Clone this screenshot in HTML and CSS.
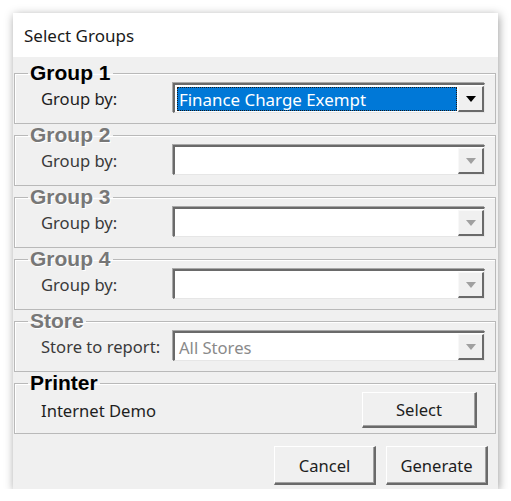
FILE: index.html
```html
<!DOCTYPE html>
<html>
<head>
<meta charset="utf-8">
<title>Select Groups</title>
<link rel="stylesheet" href="styles.css">
</head>
<body>
<div class="window">
  <div class="titlebar">Select Groups</div>
  <div class="body">
    <fieldset class="frame">
      <legend class="legend">Group 1</legend>
      <div class="row">
        <span class="label">Group by:</span>
        <div class="combo">
          <div class="value selected"><span class="focus">Finance Charge Exempt</span></div>
          <div class="drop"><span class="arrow"></span></div>
        </div>
      </div>
    </fieldset>
    <fieldset class="frame disabled">
      <legend class="legend">Group 2</legend>
      <div class="row">
        <span class="label">Group by:</span>
        <div class="combo">
          <div class="value"></div>
          <div class="drop"><span class="arrow"></span></div>
        </div>
      </div>
    </fieldset>
    <fieldset class="frame disabled">
      <legend class="legend">Group 3</legend>
      <div class="row">
        <span class="label">Group by:</span>
        <div class="combo">
          <div class="value"></div>
          <div class="drop"><span class="arrow"></span></div>
        </div>
      </div>
    </fieldset>
    <fieldset class="frame disabled">
      <legend class="legend">Group 4</legend>
      <div class="row">
        <span class="label">Group by:</span>
        <div class="combo">
          <div class="value"></div>
          <div class="drop"><span class="arrow"></span></div>
        </div>
      </div>
    </fieldset>
    <fieldset class="frame disabled">
      <legend class="legend">Store</legend>
      <div class="row">
        <span class="label">Store to report:</span>
        <div class="combo">
          <div class="value">All Stores</div>
          <div class="drop"><span class="arrow"></span></div>
        </div>
      </div>
    </fieldset>
    <fieldset class="frame printer">
      <legend class="legend">Printer</legend>
      <div class="row prow">
        <span class="label">Internet Demo</span>
        <button class="btn select-btn">Select</button>
      </div>
    </fieldset>
    <div class="actions">
      <button class="btn action">Cancel</button>
      <button class="btn action">Generate</button>
    </div>
  </div>
</div>
</body>
</html>
```
FILE: styles.css
```css
html, body {
  margin: 0;
  padding: 0;
  background: #ffffff;
}

body {
  font-family: "Noto Sans", "Liberation Sans", sans-serif;
  color: #1e1e1e;
}

.window {
  margin: 13px 0 0 13px;
  width: 485px;
  box-shadow: 1px 2px 9px rgba(0, 0, 0, 0.38);
  background: #f0f0f0;
}

.titlebar {
  height: 44px;
  background: #ffffff;
  display: flex;
  align-items: center;
  padding-left: 11px;
  font-size: 17px;
  color: #1a1a1a;
  box-sizing: border-box;
}

.body {
  padding: 6px 2px 4px 1px;
}

.frame {
  margin: 0 0 1px 0;
  padding: 0 10px 10px 13px;
  border: 1px solid #b9b9b9;
  box-shadow: inset 1px 1px 0 #ffffff;
  min-width: 0;
}

.legend {
  padding: 0 2px;
  font-family: "Liberation Sans", Arial, sans-serif;
  font-weight: bold;
  font-size: 21px;
  line-height: 20px;
  color: #000000;
}

.disabled .legend {
  color: #777777;
  text-shadow: 1px 1px 0 #ffffff;
}

.row {
  display: flex;
  align-items: center;
  padding-left: 13px;
}

.label {
  width: 132px;
  flex: none;
  font-size: 16.6px;
  color: #1e1e1e;
  white-space: nowrap;
}

.disabled .label {
  color: #3a3a3a;
}

.combo {
  flex: 1;
  height: 30px;
  box-sizing: border-box;
  display: flex;
  background: #ffffff;
  border-style: solid;
  border-width: 2px 1px 1px 2px;
  border-color: #6a6a6a #e6e6e6 #e6e6e6 #6a6a6a;
  box-shadow: -1px -1px 0 #a8a8a8;
  padding-top: 1px;
}

.value {
  flex: 1;
  margin: 1px 1px 1px 2px;
  display: flex;
  align-items: center;
  font-size: 16.6px;
  color: #8a8a8a;
  padding-left: 2px;
}

.value.selected {
  background: #0078d7;
  padding: 0;
}

.focus {
  flex: 1;
  align-self: stretch;
  display: flex;
  align-items: center;
  padding-left: 1px;
  border: 1px dotted #1a1a1a;
  color: #ffffff;
  font-size: 16.9px;
}

.drop {
  width: 26px;
  flex: none;
  box-sizing: border-box;
  background: #f0f0f0;
  border-style: solid;
  border-width: 1px 2px 2px 1px;
  border-color: #f8f8f8 #6a6a6a #6a6a6a #f8f8f8;
  display: flex;
  align-items: center;
  justify-content: center;
}

.arrow {
  width: 0;
  height: 0;
  border-left: 5px solid transparent;
  border-right: 5px solid transparent;
  border-top: 6px solid #000000;
}

.disabled .arrow {
  border-top-color: #a0a0a0;
}

.printer {
  padding-bottom: 5px;
}

.prow {
  justify-content: space-between;
  margin-top: -1px;
}

.btn {
  font-family: "Noto Sans", "Liberation Sans", sans-serif;
  font-size: 16.6px;
  color: #1e1e1e;
  background: #f0f0f0;
  border-style: solid;
  border-width: 1px 2px 2px 1px;
  border-color: #ffffff #6a6a6a #6a6a6a #ffffff;
  box-shadow: inset -1px -1px 0 #a0a0a0;
  padding: 0;
  box-sizing: border-box;
}

.select-btn {
  width: 115px;
  height: 36px;
  margin-right: 8px;
}

.actions {
  display: flex;
  justify-content: flex-end;
  gap: 10px;
  margin-top: 12px;
  padding-right: 8px;
}

.action {
  width: 102px;
  height: 39px;
}
```
